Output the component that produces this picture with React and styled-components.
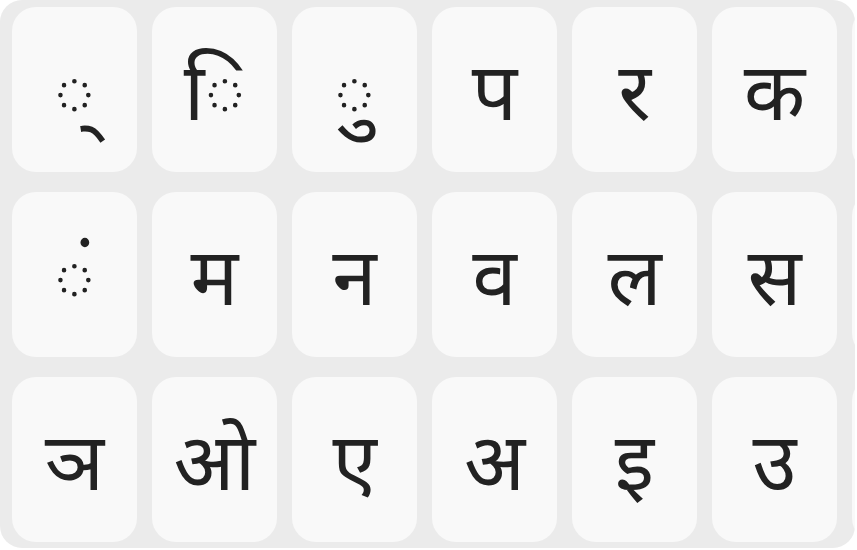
import styled, { createGlobalStyle } from 'styled-components';

const GlobalStyle = createGlobalStyle`
  html, body {
    margin: 0;
    padding: 0;
    background: #ffffff;
  }
`;

const rows = [
  ['\u25CC\u094D', '\u25CC\u093F', '\u25CC\u0941', 'प', 'र', 'क'],
  ['\u25CC\u0902', 'म', 'न', 'व', 'ल', 'स'],
  ['ञ', 'ओ', 'ए', 'अ', 'इ', 'उ'],
];

const App = () => {
  return (
    <>
      <GlobalStyle />
      <Keyboard>
        {rows.map((row, i) => (
          <KeyRow key={i}>
            {row.map(ch => (
              <Key key={ch}>
                <KeyLabel>{ch}</KeyLabel>
              </Key>
            ))}
            {/* next key, only its edge shows */}
            <Key />
          </KeyRow>
        ))}
      </Keyboard>
    </>
  );
};

export default App;

const Keyboard = styled.div`
  width: 855px;
  height: 548px;
  box-sizing: border-box;
  padding: 7px 0 0 12px;
  background: #ebebeb;
  border-radius: 22px;
  overflow: hidden;
  display: flex;
  flex-direction: column;
  gap: 20px;
`;

const KeyRow = styled.div`
  display: flex;
  gap: 15px;
`;

const Key = styled.div`
  flex: 0 0 125px;
  height: 165px;
  box-sizing: border-box;
  padding-top: 22px;
  background: #f9f9f9;
  border-radius: 24px;
  display: flex;
  align-items: center;
  justify-content: center;
`;

const KeyLabel = styled.span`
  font-family: "Noto Sans Devanagari", "Noto Sans", "Lohit Devanagari", sans-serif;
  font-size: 80px;
  color: #222222;
  line-height: 1;
`;
